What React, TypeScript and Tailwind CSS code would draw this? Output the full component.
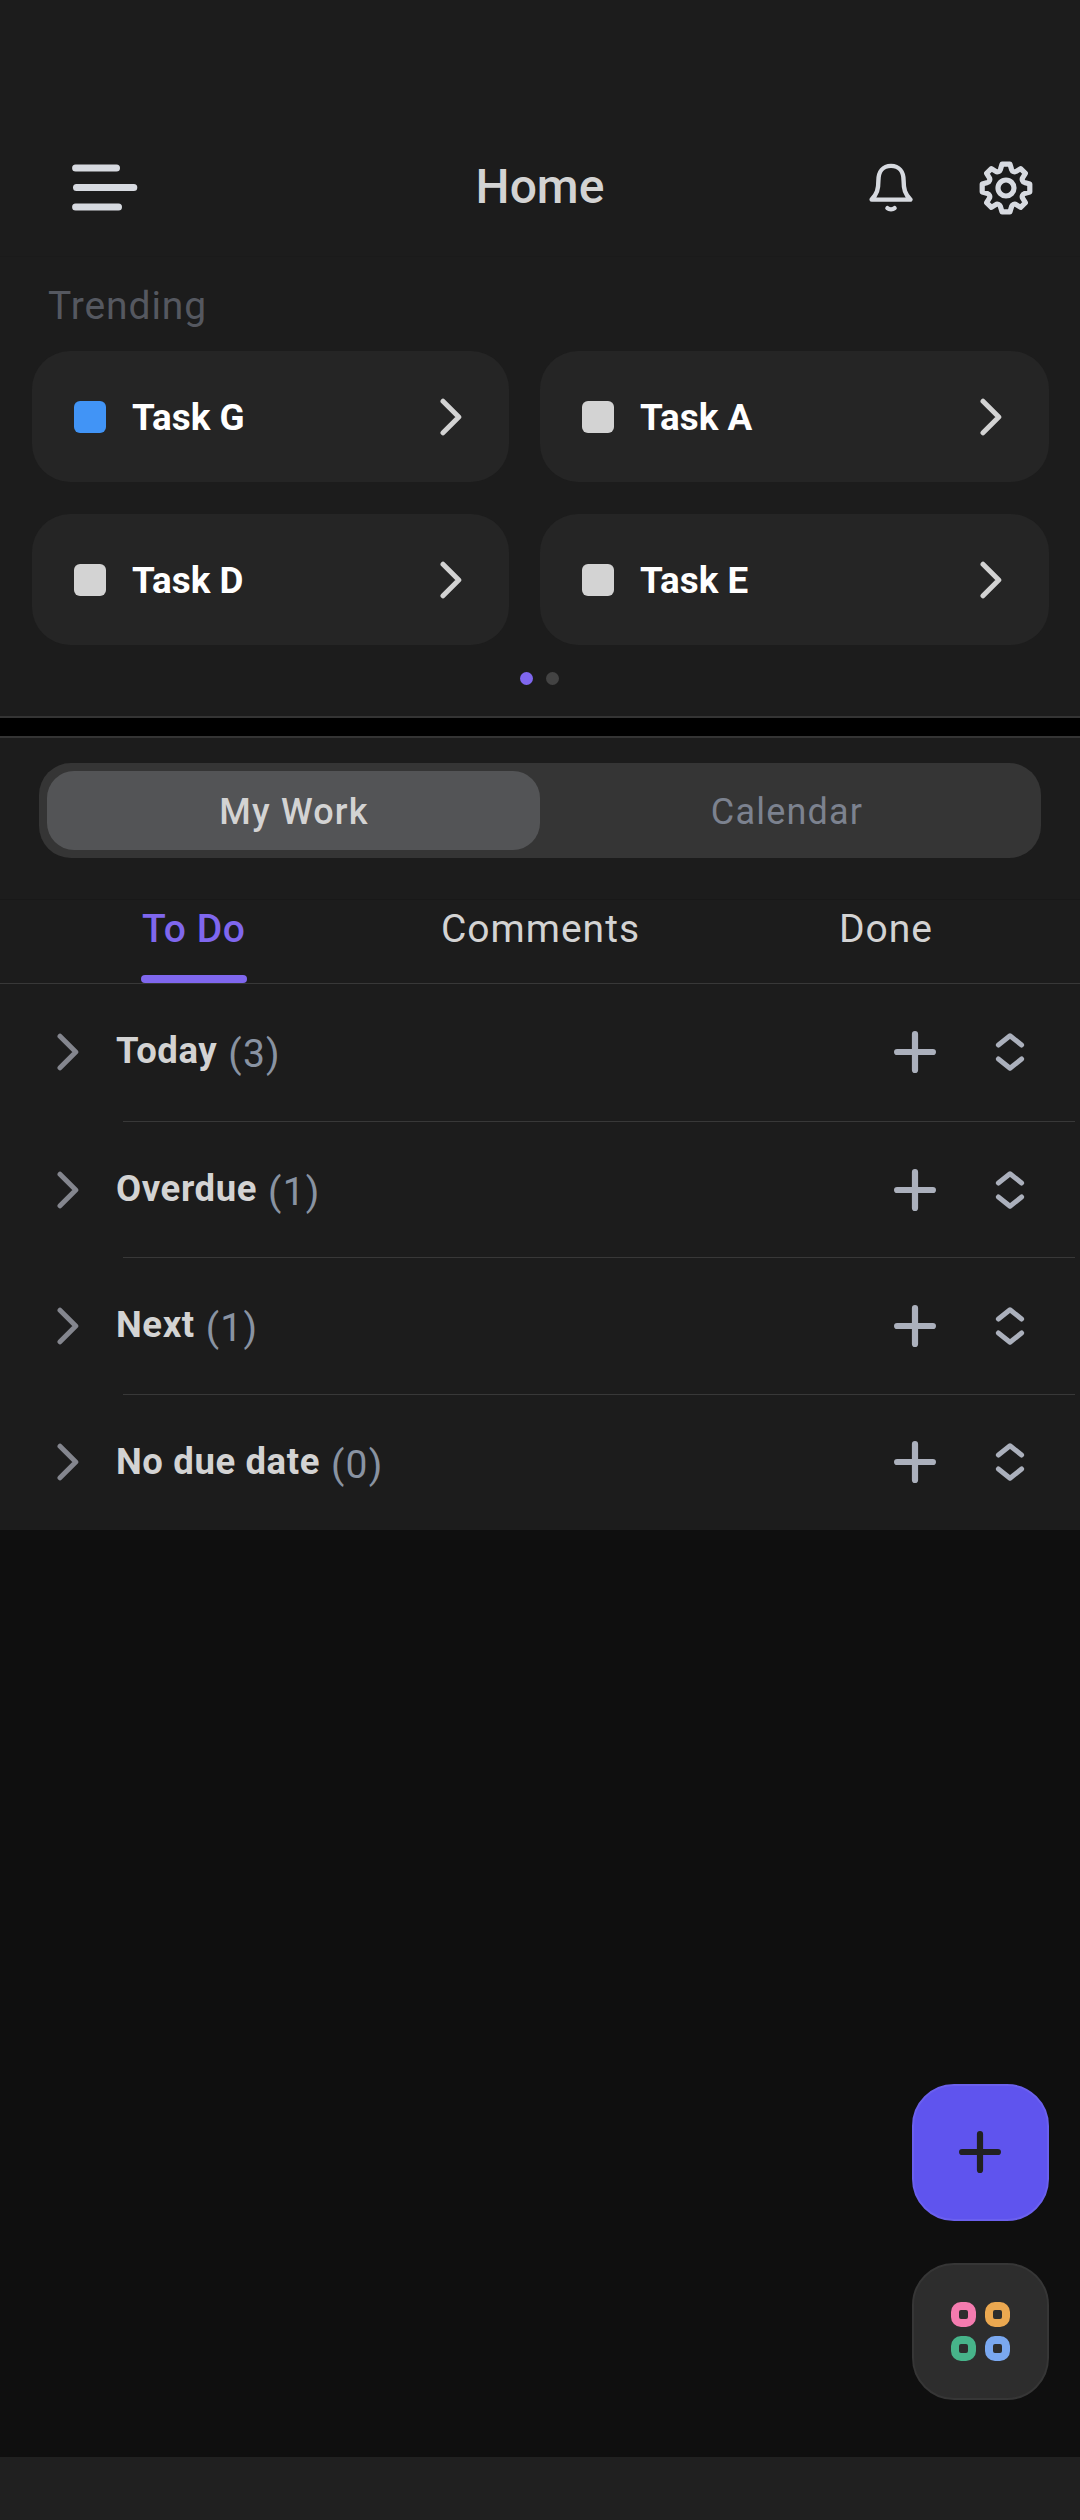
import { useState } from "react";

const trending = [
  { name: "Task G", color: "bg-[#4194f6]" },
  { name: "Task A", color: "bg-[#d3d3d3]" },
  { name: "Task D", color: "bg-[#d3d3d3]" },
  { name: "Task E", color: "bg-[#d3d3d3]" },
];

const groups = [
  { name: "Today", count: 3, height: "h-[138px] pb-[3px]" },
  { name: "Overdue", count: 1, height: "h-[136px] pb-px" },
  { name: "Next", count: 1, height: "h-[137px] pb-[2px]" },
  { name: "No due date", count: 0, height: "h-[135px] pb-px" },
];

function ChevronIcon({ className }: { className?: string }) {
  return (
    <svg width="22" height="38" viewBox="0 0 22 38" fill="none" className={className}>
      <path d="M3 3.2L18.8 19L3 34.8" stroke="currentColor" strokeWidth="5" strokeLinecap="round" strokeLinejoin="round" />
    </svg>
  );
}

function PlusIcon({ className }: { className?: string }) {
  return (
    <svg width="42" height="42" viewBox="0 0 42 42" fill="none" className={className}>
      <path d="M21 3.1V38.9M3.1 21H38.9" stroke="currentColor" strokeWidth="6.2" strokeLinecap="round" />
    </svg>
  );
}

function SortIcon({ className }: { className?: string }) {
  return (
    <svg width="30" height="38" viewBox="0 0 30 38" fill="none" className={className}>
      <path
        d="M3.4 12L15 2.8L26.6 12M3.4 26L15 35.2L26.6 26"
        stroke="currentColor"
        strokeWidth="5"
        strokeLinecap="round"
        strokeLinejoin="round"
      />
    </svg>
  );
}

function BellIcon() {
  return (
    <svg width="44" height="50" viewBox="0 0 44 50" fill="none" stroke="#d7dae0" strokeWidth="4.4" strokeLinecap="round" strokeLinejoin="round">
      <path d="M2.6 36.6C8 31 9.4 26.5 9.4 17.5C9.4 8.5 14 2.9 22 2.9C30 2.9 34.6 8.5 34.6 17.5C34.6 26.5 36 31 41.4 36.6Z" />
      <path d="M18.4 45.2C20.2 46.8 23.8 46.8 25.6 45.2" />
    </svg>
  );
}

function GearIcon() {
  return (
    <svg width="54" height="54" viewBox="-27 -27 54 54" fill="none" stroke="#d7dae0" strokeWidth="5.2" strokeLinejoin="round">
      <circle r="8" />
      <path d="M-4 -23.8H4L5.6 -18.4C6.2 -16.6 8.6 -15.6 10.2 -16.6L14.6 -19.4L19.4 -14.6L16.6 -10.2C15.6 -8.6 16.6 -6.2 18.4 -5.6L23.8 -4V4L18.4 5.6C16.6 6.2 15.6 8.6 16.6 10.2L19.4 14.6L14.6 19.4L10.2 16.6C8.6 15.6 6.2 16.6 5.6 18.4L4 23.8H-4L-5.6 18.4C-6.2 16.6 -8.6 15.6 -10.2 16.6L-14.6 19.4L-19.4 14.6L-16.6 10.2C-15.6 8.6 -16.6 6.2 -18.4 5.6L-23.8 4V-4L-18.4 -5.6C-16.6 -6.2 -15.6 -8.6 -16.6 -10.2L-19.4 -14.6L-14.6 -19.4L-10.2 -16.6C-8.6 -15.6 -6.2 -16.6 -5.6 -18.4Z" />
    </svg>
  );
}

export default function App() {
  const [view] = useState("My Work");

  return (
    <div className="flex min-h-[2520px] w-[1080px] flex-col bg-[#0f0f0f] font-['Roboto',sans-serif] text-[#d3d3d3]">
      <div className="bg-[#1c1c1c]">
        {/* Header */}
        <header className="grid h-[257px] grid-cols-3 items-center border-b border-[#1a1a1a] px-[47px] pt-[119px]">
          <svg width="68" height="50" viewBox="0 0 68 50" fill="none" stroke="#d7dae0" strokeWidth="7" strokeLinecap="round" className="ml-6">
            <path d="M4.6 5H45.5M5.5 24.5H62.8M4.6 44H47.5" />
          </svg>
          <h1 className="pb-px text-center text-[48px] leading-none font-medium">Home</h1>
          <div className="flex items-center justify-end gap-[66px]">
            <BellIcon />
            <GearIcon />
          </div>
        </header>

        {/* Trending */}
        <section className="px-8">
          <h2 className="h-[94px] px-4 pt-[26px] text-[39px] leading-[46px] tracking-[0.9px] text-[#555860]">Trending</h2>
          <div className="grid grid-cols-[477px_509px] gap-x-[31px] gap-y-8">
            {trending.map((task) => (
              <button key={task.name} className="flex h-[131px] items-center rounded-[38px] bg-[#252525] pr-[47px] pl-[42px]">
                <span className={`h-8 w-8 rounded-[6px] ${task.color}`} />
                <span className="mt-[2px] ml-[26px] text-[36.8px] font-bold text-white">{task.name}</span>
                <ChevronIcon className="ml-auto" />
              </button>
            ))}
          </div>
          <div className="flex h-[71px] justify-center gap-[13px] pt-[27px] pr-px">
            <span className="h-[13px] w-[13px] rounded-full bg-[#7f67ee]" />
            <span className="h-[13px] w-[13px] rounded-full bg-[#434343]" />
          </div>
        </section>

        <div className="h-[22px] border-y-2 border-[#343434] bg-black" />

        {/* View switch */}
        <div className="px-[39px] pt-[25px] pb-[41px]">
          <div className="flex h-[95px] rounded-[32px] bg-[#353535] p-2">
            {["My Work", "Calendar"].map((label) => (
              <button
                key={label}
                className={
                  view === label
                    ? "flex-1 rounded-[27px] bg-[#535456] pt-[2px] pl-px text-[36px] font-medium tracking-[1.2px]"
                    : "flex-1 pt-[2px] pl-px text-[36px] tracking-[1.2px] text-[#7c828f]"
                }
              >
                {label}
              </button>
            ))}
          </div>
        </div>

        {/* Tabs */}
        <nav className="flex h-[85px] justify-between border-t border-b border-t-[#181818] border-b-[#383838] pr-[147px] pl-[141px] text-[39px] leading-[46px] tracking-[1px]">
          <div className="flex w-[106px] flex-col justify-between text-[#7f67ee]">
            <span className="pt-[6px] pl-px font-medium tracking-[0.6px] whitespace-nowrap">To Do</span>
            <span className="h-2 w-[106px] rounded-full bg-[#7f67ee]" />
          </div>
          <span className="mr-[5px] pt-[6px]">Comments</span>
          <span className="pt-[6px]">Done</span>
        </nav>

        {groups.map((group) => (
          <div key={group.name} className="flex flex-col">
            <div className={`flex items-center pr-[55px] pl-[57px] ${group.height}`}>
              <ChevronIcon className="text-[#84868e]" />
              <span className="ml-[37px] text-[36.5px] font-bold tracking-[0.6px]">{group.name}</span>
              <span className="mt-[6px] ml-[11px] text-[39px] tracking-[1.2px] text-[#8993a2]">({group.count})</span>
              <PlusIcon className="ml-auto text-[#abb0bc]" />
              <SortIcon className="ml-[59px] text-[#abb0bc]" />
            </div>
            {group.name !== "No due date" && <div className="-mt-px mr-[5px] ml-[123px] h-px bg-[#383838]" />}
          </div>
        ))}
      </div>

      {/* Floating actions */}
      <div className="mt-auto mr-[31px] mb-[57px] flex flex-col items-end gap-[42px]">
        <button className="flex h-[137px] w-[137px] items-center justify-center rounded-[42px] border-2 border-[#6b60ee] bg-[#5f54ee] pr-px pb-px text-[#212121]">
          <PlusIcon />
        </button>
        <button className="grid h-[137px] w-[137px] grid-cols-[25px_25px] place-content-center gap-[9px] rounded-[42px] border-2 border-[#363636] bg-[#2d2d2d]">
          <span className="h-[25px] w-[25px] rounded-[10px] border-8 border-[#f47baf]" />
          <span className="h-[25px] w-[25px] rounded-[10px] border-8 border-[#eba850]" />
          <span className="h-[25px] w-[25px] rounded-[10px] border-8 border-[#47b48a]" />
          <span className="h-[25px] w-[25px] rounded-[10px] border-8 border-[#7aa8f0]" />
        </button>
      </div>
      <div className="h-[63px] bg-[#202020]" />
    </div>
  );
}
